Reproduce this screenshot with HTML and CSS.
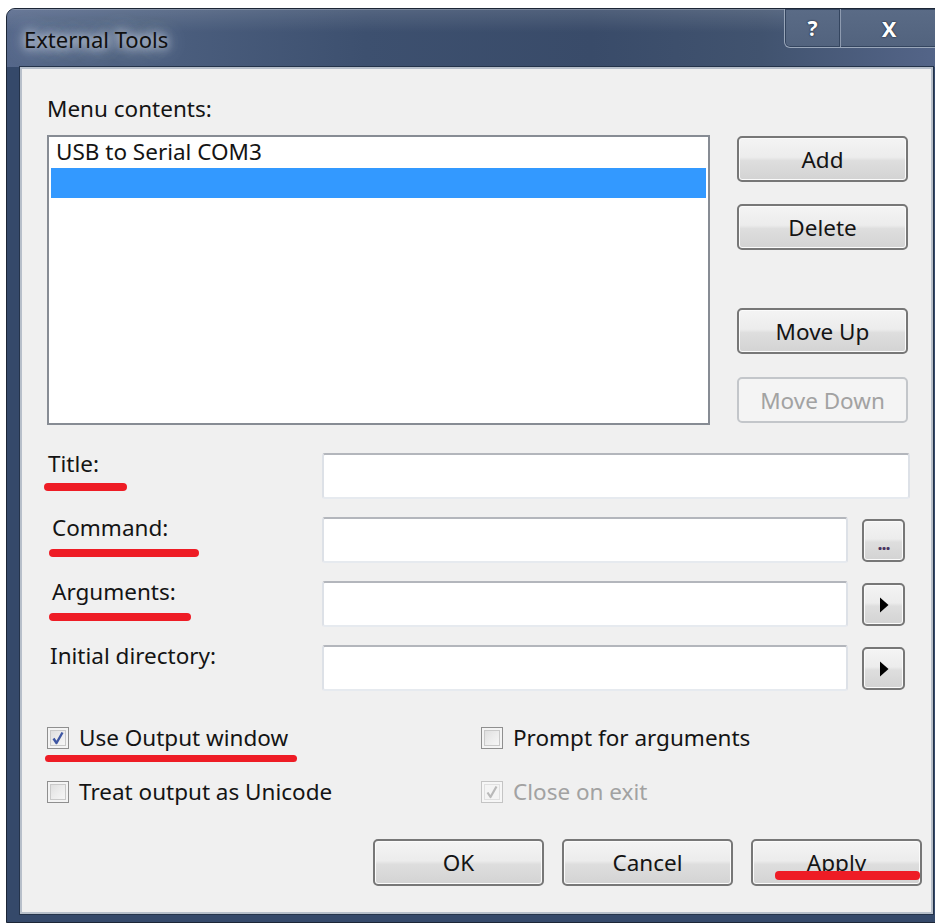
FILE: index.html
```html
<!DOCTYPE html>
<html lang="en">
<head>
<meta charset="utf-8">
<title>External Tools</title>
<link rel="stylesheet" href="styles.css">
</head>
<body>
<div class="window">
  <header class="titlebar">
    <span class="caption">External Tools</span>
    <div class="caption-buttons">
      <span class="cap-btn cap-help">?</span>
      <span class="cap-btn cap-close">X</span>
    </div>
  </header>

  <main class="client">
    <section class="menu-area">
      <div class="menu-col">
        <div class="menu-label">Menu contents:</div>
        <div class="listbox">
          <div class="list-item">USB to Serial COM3</div>
          <div class="list-item selected"></div>
        </div>
      </div>
      <div class="side-buttons">
        <button class="btn side">Add</button>
        <button class="btn side btn-delete">Delete</button>
        <button class="btn side btn-up">Move Up</button>
        <button class="btn side btn-down" disabled>Move Down</button>
      </div>
    </section>

    <section class="fields">
      <div class="field-label lbl-title">Title:<span class="ink ink-title"></span></div>
      <div class="textbox textbox-wide"></div>

      <div class="field-label lbl-command">Command:<span class="ink ink-command"></span></div>
      <div class="textbox"></div>
      <button class="btn mini"><span class="dots">...</span></button>

      <div class="field-label lbl-args">Arguments:<span class="ink ink-args"></span></div>
      <div class="textbox"></div>
      <button class="btn mini">
        <svg class="arrow" width="10" height="16" viewBox="0 0 10 16"><polygon points="1,0.5 9.5,8 1,15.5" fill="#000"/></svg>
      </button>

      <div class="field-label lbl-dir">Initial directory:</div>
      <div class="textbox"></div>
      <button class="btn mini">
        <svg class="arrow" width="10" height="16" viewBox="0 0 10 16"><polygon points="1,0.5 9.5,8 1,15.5" fill="#000"/></svg>
      </button>
    </section>

    <section class="options">
      <div class="check check-output">
        <span class="box checked">
          <svg width="16" height="16" viewBox="0 0 16 16"><path d="M3.5 8.5 L6.5 13 L12.5 2.5" fill="none" stroke="#3f57a3" stroke-width="2.4" stroke-linejoin="round"/></svg>
        </span>
        <span class="check-text">Use Output window</span>
        <span class="ink ink-output"></span>
      </div>
      <div class="check">
        <span class="box"></span>
        <span class="check-text">Prompt for arguments</span>
      </div>
      <div class="check">
        <span class="box"></span>
        <span class="check-text">Treat output as Unicode</span>
      </div>
      <div class="check disabled">
        <span class="box checked">
          <svg width="16" height="16" viewBox="0 0 16 16"><path d="M3.5 8.5 L6.5 13 L12.5 2.5" fill="none" stroke="#b9b9b9" stroke-width="2.2" stroke-linejoin="round"/></svg>
        </span>
        <span class="check-text">Close on exit</span>
      </div>
    </section>

    <footer class="actions">
      <button class="btn action">OK</button>
      <button class="btn action">Cancel</button>
      <button class="btn action btn-apply">Apply<span class="ink ink-apply"></span></button>
    </footer>
  </main>
</div>
</body>
</html>
```

FILE: styles.css
```css
* {
  box-sizing: border-box;
}

html,
body {
  margin: 0;
}

body {
  width: 935px;
  height: 924px;
  overflow: hidden;
  background: #ffffff;
  font-family: "Noto Sans", "Open Sans", sans-serif;
  font-size: 22.5px;
  color: #141414;
}

/* ---------- window frame ---------- */
.window {
  margin: 8px 0 0 6px;
  width: 944px;
  height: 915px;
  border: 1px solid #1c2636;
  border-radius: 9px 9px 0 0;
  background: #35496a;
  display: flex;
  flex-direction: column;
  overflow: hidden;
}

.titlebar {
  height: 58px;
  flex: none;
  display: flex;
  align-items: flex-start;
  padding-left: 17px;
  background:
    linear-gradient(180deg, rgba(255, 255, 255, 0.12) 0%, rgba(255, 255, 255, 0) 40%),
    linear-gradient(90deg, #55678a 0%, #4d6080 14%, #3d506f 38%, #394b69 62%, #41536f 80%, #55668a 100%);
  box-shadow: inset 0 1px 0 rgba(255, 255, 255, 0.22);
}

.caption {
  margin-top: 15px;
  line-height: 30px;
  font-size: 22px;
  color: #101010;
  text-shadow:
    0 0 8px rgba(235, 240, 248, 0.95),
    0 0 16px rgba(225, 232, 244, 0.85),
    0 0 24px rgba(215, 225, 240, 0.7);
}

.caption-buttons {
  margin-left: auto;
  margin-right: 11px;
  display: flex;
  height: 39px;
  border: 1px solid #9aa7ba;
  border-top: 0;
  border-radius: 0 0 0 6px;
  box-shadow: inset 0 0 0 1px #34455f;
  background: linear-gradient(180deg, #5a6b86 0%, #52637e 100%);
  overflow: hidden;
}

.cap-btn {
  display: flex;
  align-items: center;
  justify-content: center;
  height: 100%;
  color: #ffffff;
  font-weight: 700;
  font-size: 21px;
  text-shadow: 0 0 2px #1b2535, 0 0 1px #1b2535;
}

.cap-help {
  width: 56px;
  border-right: 1px solid #8e9bb0;
  box-shadow: inset -1px 0 0 #34455f;
}

.cap-close {
  width: 96px;
  font-size: 22px;
}

/* ---------- client area ---------- */
.client {
  flex: none;
  height: 847px;
  margin: 0 16px 0 13px;
  border: 2px solid #b7bfca;
  box-shadow: 0 0 0 1px #24334a;
  background: #f0f0f0;
  padding: 25px 0 0 25px;
}

.menu-area {
  display: flex;
  align-items: flex-start;
}

.menu-label {
  line-height: 30px;
}

.listbox {
  margin-top: 11px;
  width: 663px;
  height: 290px;
  border: 2px solid #878c94;
  background: #ffffff;
}

.list-item {
  height: 30px;
  line-height: 30px;
  padding-left: 5px;
  margin: 0 2px;
}

.list-item:first-child {
  height: 31px;
}

.list-item.selected {
  background: #3399ff;
}

.side-buttons {
  margin: 42px 0 0 27px;
  display: flex;
  flex-direction: column;
}

/* ---------- buttons ---------- */
.btn {
  font: inherit;
  color: #141414;
  padding: 0;
  border: 2px solid #777777;
  border-radius: 5px;
  background: linear-gradient(180deg, #f4f4f4 0%, #ececec 46%, #dedede 54%, #d3d3d3 100%);
  box-shadow: inset 0 0 0 1px #fbfbfb;
  display: flex;
  align-items: center;
  justify-content: center;
}

.btn:disabled {
  color: #a2a2a2;
  border-color: #c3c6ca;
  background: #f4f4f4;
  box-shadow: none;
}

.side {
  width: 171px;
  height: 46px;
}

.btn-delete {
  margin-top: 22px;
}

.btn-up {
  margin-top: 58px;
}

.btn-down {
  margin-top: 23px;
}

/* ---------- text fields ---------- */
.fields {
  margin-top: 28px;
  display: grid;
  grid-template-columns: 261px 526px 43px;
  grid-auto-rows: 46px;
  column-gap: 14px;
  row-gap: 18px;
}

.field-label {
  position: relative;
  align-self: start;
  margin-top: -4px;
  line-height: 30px;
  justify-self: start;
  white-space: nowrap;
}

.lbl-title {
  margin-left: 1px;
}

.lbl-command,
.lbl-args {
  margin-left: 5px;
}

.lbl-dir {
  margin-left: 3px;
}

.textbox {
  grid-column: 2;
  background: #ffffff;
  border: 2px solid #dde1e7;
  border-top-color: #b3b6bc;
  border-bottom-color: #e6eaef;
  border-radius: 3px;
}

.textbox-wide {
  grid-column: 2 / span 2;
  width: 588px;
}

.mini {
  grid-column: 3;
  align-self: center;
  width: 43px;
  height: 43px;
}

.dots {
  font-size: 18px;
  font-weight: 700;
  letter-spacing: -1px;
  color: #4a3560;
  margin-top: 6px;
}

.arrow {
  display: block;
  margin-left: 1px;
  margin-top: 2px;
}

/* ---------- check boxes ---------- */
.options {
  margin-top: 32px;
  display: grid;
  grid-template-columns: 434px 1fr;
  grid-auto-rows: 30px;
  row-gap: 24px;
}

.check {
  position: relative;
  display: flex;
  align-items: center;
}

.box {
  width: 22px;
  height: 22px;
  flex: none;
  border: 1px solid #8f8f8f;
  background: linear-gradient(135deg, #dadada 0%, #ececec 50%, #fafafa 100%);
  box-shadow: inset 0 0 0 2px #f4f4f4, inset 0 0 0 3px #c9c9c9;
  display: flex;
  align-items: center;
  justify-content: center;
}

.check-text {
  margin-left: 10px;
  line-height: 30px;
}

.check.disabled .check-text {
  color: #a2a2a2;
}

.check.disabled .box {
  border-color: #c4c4c4;
  background: #f4f4f4;
  box-shadow: inset 0 0 0 2px #f6f6f6, inset 0 0 0 3px #e0e0e0;
}

/* ---------- dialog buttons ---------- */
.actions {
  margin-top: 32px;
  padding-right: 9px;
  display: flex;
  justify-content: flex-end;
  gap: 18px;
}

.action {
  width: 171px;
  height: 47px;
}

.btn-apply {
  position: relative;
}

/* ---------- red marker strokes ---------- */
.ink {
  position: absolute;
  height: 8px;
  background: #ee1c25;
  border-radius: 4px;
}

.ink-title {
  left: -4px;
  top: 34px;
  width: 83px;
}

.ink-command {
  left: -3px;
  top: 36px;
  width: 150px;
}

.ink-args {
  left: -3px;
  top: 36px;
  width: 142px;
}

.ink-output {
  left: -2px;
  top: 32px;
  width: 252px;
  height: 7px;
}

.ink-apply {
  left: 22px;
  top: 30px;
  width: 145px;
  height: 9px;
}
```
